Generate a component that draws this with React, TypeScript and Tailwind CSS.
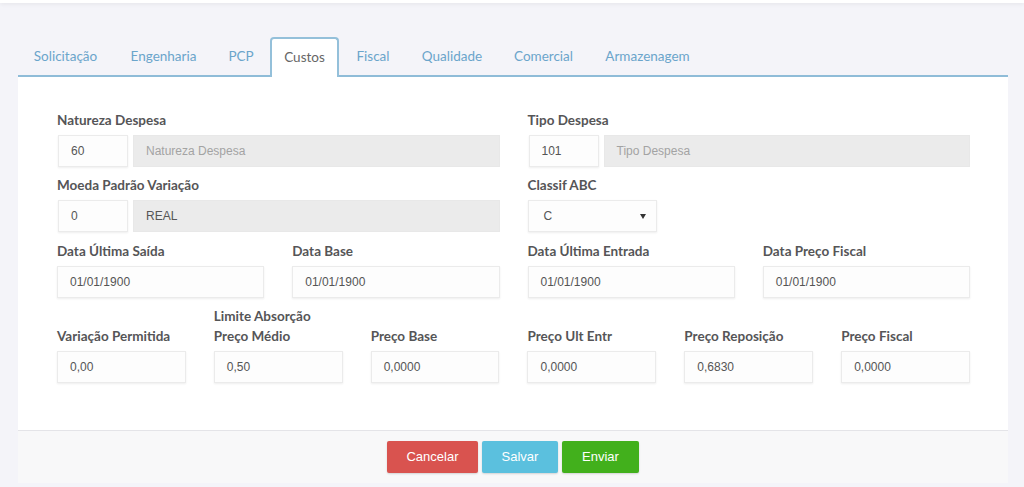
import React from "react";

const tabs: { label: string; w: string; active?: boolean }[] = [
  { label: "Solicitação", w: "w-[95px]" },
  { label: "Engenharia", w: "w-[97px]" },
  { label: "PCP", w: "w-[54px]" },
  { label: "Custos", w: "w-[69px]", active: true },
  { label: "Fiscal", w: "w-[64px]" },
  { label: "Qualidade", w: "w-[90px]" },
  { label: "Comercial", w: "w-[89px]" },
  { label: "Armazenagem", w: "w-[115px]" },
];

const labelBase =
  "block text-[13.5px] font-bold leading-[20px] text-[#555557] font-['Lato',sans-serif] whitespace-nowrap";

function Input({ value, grey, placeholder, className = "" }: { value?: string; grey?: boolean; placeholder?: string; className?: string }) {
  return (
    <div
      className={`h-[32px] flex items-center px-[12px] text-[12px] font-['Liberation_Sans',Arial,sans-serif] ${
        grey
          ? "bg-[#ebebeb] border border-[#e8e8e8]"
          : "bg-[#fdfdfd] border border-[#ebebeb] shadow-[0_1px_2px_rgba(0,0,0,0.07)]"
      } ${className}`}
    >
      {value ? (
        <span className="text-[#555]">{value}</span>
      ) : (
        <span className="text-[#a3a3a3]">{placeholder}</span>
      )}
    </div>
  );
}

function Field({ label, value, label2 }: { label: string; value: string; label2?: string }) {
  return (
    <div className="flex flex-col justify-end">
      {label2 && <span className={labelBase}>{label2}</span>}
      <span className={`${labelBase} mb-[5px]`}>{label}</span>
      <Input value={value} />
    </div>
  );
}

function CodeField({ label, code, text, textIsValue }: { label: string; code: string; text: string; textIsValue?: boolean }) {
  return (
    <div className="flex flex-col">
      <span className={`${labelBase} mb-[5px]`}>{label}</span>
      <div className="flex gap-[5px] pl-[1px]">
        <Input value={code} className="w-[70px] shrink-0" />
        {textIsValue ? (
          <Input value={text} grey className="flex-1" />
        ) : (
          <Input placeholder={text} grey className="flex-1" />
        )}
      </div>
    </div>
  );
}

export default function App() {
  return (
    <div className="w-[1024px] h-[487px] bg-[#f4f4f9] overflow-hidden relative font-['Lato',sans-serif]">
      <div className="h-[3px] bg-white shadow-[0_1px_4px_rgba(0,0,0,0.08)]" />
      <div className="mx-[18px] w-[990px] mt-[34px]">
        {/* Tabs */}
        <div className="flex h-[40px] border-b-2 border-[#8fbcd8]">
          {tabs.map((t) => (
            <div
              key={t.label}
              className={`${t.w} mr-[2px] -mb-[2px] flex items-center justify-center pb-[2px] text-[13.5px] ${
                t.active
                  ? "bg-white border-2 border-b-0 border-[#94c0da] rounded-t-[4px] text-[#666]"
                  : "text-[#6ba5cb]"
              }`}
            >
              {t.label}
            </div>
          ))}
        </div>

        {/* Panel */}
        <div className="bg-white pt-[33px] pb-[47px] pl-[39px] pr-[38px] border-b border-[#e4e4e8]">
          <div className="grid grid-cols-2 gap-x-[28px]">
            <CodeField label="Natureza Despesa" code="60" text="Natureza Despesa" />
            <CodeField label="Tipo Despesa" code="101" text="Tipo Despesa" />
          </div>
          <div className="grid grid-cols-2 gap-x-[28px] mt-[8px]">
            <CodeField label="Moeda Padrão Variação" code="0" text="REAL" textIsValue />
            <div className="flex flex-col">
              <span className={`${labelBase} mb-[5px]`}>Classif ABC</span>
              <div className="w-[129px] h-[32px] flex items-center justify-between pl-[15px] pr-[10px] bg-[#fdfdfd] border border-[#ebebeb] shadow-[0_1px_2px_rgba(0,0,0,0.07)] text-[12px] text-[#555] font-['Liberation_Sans',Arial,sans-serif]">
                <span>C</span>
                <svg width="6" height="5" viewBox="0 0 6 5">
                  <path d="M0 0 L6 0 L3 5 Z" fill="#333" />
                </svg>
              </div>
            </div>
          </div>
          <div className="grid grid-cols-2 gap-x-[28px] mt-[9px]">
            <div className="grid grid-cols-2 gap-x-[28px]">
              <Field label="Data Última Saída" value="01/01/1900" />
              <Field label="Data Base" value="01/01/1900" />
            </div>
            <div className="grid grid-cols-2 gap-x-[28px]">
              <Field label="Data Última Entrada" value="01/01/1900" />
              <Field label="Data Preço Fiscal" value="01/01/1900" />
            </div>
          </div>
          <div className="grid grid-cols-6 gap-x-[28px] mt-[8px]">
            <Field label="Variação Permitida" value="0,00" />
            <Field label2="Limite Absorção" label="Preço Médio" value="0,50" />
            <Field label="Preço Base" value="0,0000" />
            <Field label="Preço Ult Entr" value="0,0000" />
            <Field label="Preço Reposição" value="0,6830" />
            <Field label="Preço Fiscal" value="0,0000" />
          </div>
        </div>

        {/* Footer */}
        <div className="bg-[#f8f8f9] h-[52px] pt-[10px] flex justify-center gap-[4px] font-['Liberation_Sans',Arial,sans-serif] text-[13px] text-white">
          <button className="w-[91px] h-[32px] bg-[#d9534f] rounded-[2px] shadow-[0_1px_2px_rgba(0,0,0,0.15)]">Cancelar</button>
          <button className="w-[76px] h-[32px] bg-[#5bc0de] rounded-[2px] shadow-[0_1px_2px_rgba(0,0,0,0.15)]">Salvar</button>
          <button className="w-[77px] h-[32px] bg-[#42b01c] rounded-[2px] shadow-[0_1px_2px_rgba(0,0,0,0.15)]">Enviar</button>
        </div>
      </div>
    </div>
  );
}
